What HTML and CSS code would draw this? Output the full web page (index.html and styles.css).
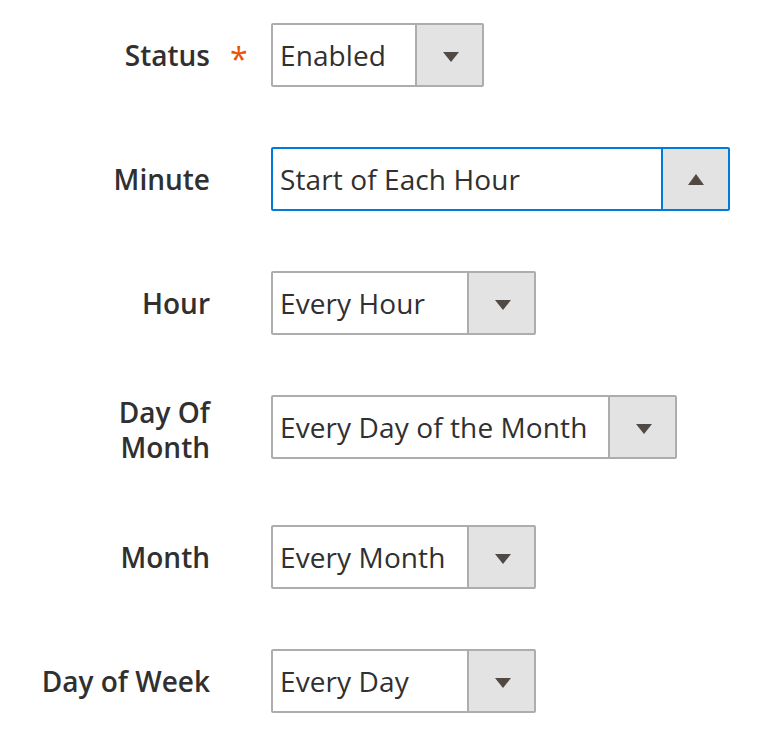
FILE: index.html
```html
<!DOCTYPE html>
<html lang="en">
<head>
<meta charset="utf-8">
<title>Cron settings</title>
<link rel="stylesheet" href="styles.css">
</head>
<body>
<form class="cron-form">
  <div class="field">
    <label class="field-label">Status</label>
    <span class="field-mark"><span class="required">*</span></span>
    <div class="select select--status">
      <span class="select-value">Enabled</span>
      <span class="select-btn"><span class="arrow arrow--down"></span></span>
    </div>
  </div>
  <div class="field">
    <label class="field-label">Minute</label>
    <span class="field-mark"></span>
    <div class="select select--minute is-open">
      <span class="select-value">Start of Each Hour</span>
      <span class="select-btn"><span class="arrow arrow--up"></span></span>
    </div>
  </div>
  <div class="field">
    <label class="field-label">Hour</label>
    <span class="field-mark"></span>
    <div class="select select--short">
      <span class="select-value">Every Hour</span>
      <span class="select-btn"><span class="arrow arrow--down"></span></span>
    </div>
  </div>
  <div class="field">
    <label class="field-label">Day Of<br>Month</label>
    <span class="field-mark"></span>
    <div class="select select--dom">
      <span class="select-value">Every Day of the Month</span>
      <span class="select-btn"><span class="arrow arrow--down"></span></span>
    </div>
  </div>
  <div class="field">
    <label class="field-label">Month</label>
    <span class="field-mark"></span>
    <div class="select select--short">
      <span class="select-value">Every Month</span>
      <span class="select-btn"><span class="arrow arrow--down"></span></span>
    </div>
  </div>
  <div class="field">
    <label class="field-label">Day of Week</label>
    <span class="field-mark"></span>
    <div class="select select--short">
      <span class="select-value">Every Day</span>
      <span class="select-btn"><span class="arrow arrow--down"></span></span>
    </div>
  </div>
</form>
</body>
</html>
```
FILE: styles.css
```css
html, body {
  margin: 0;
  padding: 0;
  background: #ffffff;
}

body {
  font-family: "Open Sans", "Noto Sans", "Liberation Sans", sans-serif;
  color: #303030;
}

.cron-form {
  display: flex;
  flex-direction: column;
  gap: 60px;
  padding-top: 23px;
}

.field {
  display: grid;
  grid-template-columns: 210px 61px 1fr;
  align-items: start;
}

.field-label {
  align-self: center;
  text-align: right;
  font-size: 28px;
  font-weight: 600;
  line-height: 35px;
  color: #303030;
}

.field-mark {
  padding-left: 20px;
}

.required {
  display: inline-block;
  margin-top: 20px;
  font-size: 32px;
  font-weight: 500;
  line-height: 1;
  color: #eb5202;
}

.select {
  justify-self: start;
  box-sizing: border-box;
  height: 64px;
  display: flex;
  border: 2px solid #adadad;
  border-radius: 2px;
  background: #ffffff;
}

.select--status { width: 213px; }
.select--minute { width: 459px; }
.select--short { width: 265px; }
.select--dom { width: 406px; }

.select-value {
  flex: 1;
  display: flex;
  align-items: center;
  padding-left: 7px;
  font-size: 28px;
  font-weight: 400;
  letter-spacing: 0.1px;
  color: #303030;
  white-space: nowrap;
}

.select-btn {
  width: 65px;
  flex: none;
  display: flex;
  align-items: center;
  justify-content: center;
  border-left: 2px solid #adadad;
  background: #e3e3e3;
}

.select.is-open,
.select.is-open .select-btn {
  border-color: #007bdb;
}

.arrow {
  width: 0;
  height: 0;
  border-left: 8px solid transparent;
  border-right: 8px solid transparent;
}

.arrow--down {
  border-top: 10px solid #514943;
  margin: 3px 0 0 3px;
}

.arrow--up {
  border-bottom: 11px solid #514943;
  margin: 0 0 0 1px;
}
```
